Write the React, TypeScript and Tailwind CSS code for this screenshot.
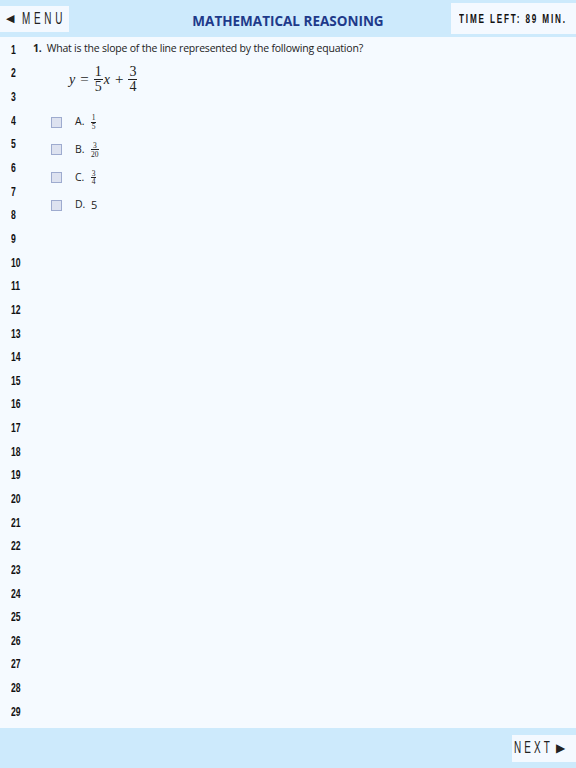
export default function App() {
  const rows = Array.from({ length: 29 }, (_, i) => i + 1);
  const options = [
    { label: "A.", value: <Frac n="1" d="5" /> },
    { label: "B.", value: <Frac n="3" d="20" /> },
    { label: "C.", value: <Frac n="3" d="4" /> },
    { label: "D.", value: <span className="text-[11px]">5</span> },
  ];

  return (
    <div className="flex h-[768px] w-[576px] flex-col bg-[#cdeafc] font-['Open_Sans',sans-serif] text-[#222]">
      {/* Header */}
      <header className="relative flex h-[37px] shrink-0 items-center justify-between">
        <div className="flex h-[26px] w-[69px] items-center bg-[#f4f9ff] pl-[6px] font-['Liberation_Sans',sans-serif] text-[#222]">
          <span className="text-[11px]">◀</span>
          <span className="ml-[8px] inline-block origin-left scale-x-[0.62] whitespace-nowrap text-[16px] font-light tracking-[6px]">
            MENU
          </span>
        </div>
        <h1 className="pointer-events-none absolute left-0 right-0 top-[11px] text-center text-[13.5px] font-bold text-[#1e3a8a]">
          MATHEMATICAL REASONING
        </h1>
        <div className="flex h-[31px] w-[125px] items-center bg-[#f4f9ff] pl-[8px] font-['Liberation_Sans',sans-serif] text-[#111]">
          <span className="inline-block origin-left scale-x-[0.68] whitespace-nowrap text-[12px] font-bold tracking-[2.7px]">
            TIME LEFT: 89 MIN.
          </span>
        </div>
      </header>

      {/* Content */}
      <main className="relative flex h-[691px] shrink-0 bg-[#f5faff]">
        <ol className="flex w-[33px] flex-col pt-[1px] font-['Liberation_Sans',sans-serif] text-[12px] font-bold text-[#111]">
          {rows.map((r) => (
            <li key={r} className="flex h-[23.65px] items-center pl-[11px]">
              <span className="inline-block origin-left scale-x-[0.72]">{r}</span>
            </li>
          ))}
        </ol>

        <div className="flex flex-col pt-[2px]">
          <p className="text-[10.5px] leading-[19px] tracking-[-0.2px]">
            <span className="font-bold">1.</span>&nbsp; What is the slope of the line represented by the following equation?
          </p>

          {/* equation */}
          <div className="mt-[8px] flex items-center pl-[36px] font-['Liberation_Serif',serif] text-[14px]">
            <span className="italic">y</span>
            <span className="mx-[5px] text-[15px]">=</span>
            <span className="inline-flex flex-col items-center leading-[12px]">
              <span>1</span>
              <span className="my-[1px] h-px w-[9px] bg-[#222]" />
              <span>5</span>
            </span>
            <span className="ml-[1px] italic">x</span>
            <span className="mx-[5px] text-[15px]">+</span>
            <span className="inline-flex flex-col items-center leading-[12px]">
              <span>3</span>
              <span className="my-[1px] h-px w-[9px] bg-[#222]" />
              <span>4</span>
            </span>
          </div>

          <div className="mt-[22px] flex flex-col gap-[13.7px] pl-[18px]">
            {options.map((o) => (
              <div key={o.label} className="flex h-[14px] items-center">
                <span className="h-[11px] w-[11px] border border-[#9eabcf] bg-[#dde2f0]" />
                <span className="ml-[13px] w-[15px] text-[10.5px]">{o.label}</span>
                <span className="ml-[1px] text-[10.5px]">{o.value}</span>
              </div>
            ))}
          </div>
        </div>
      </main>

      {/* Footer */}
      <footer className="flex flex-1 items-center justify-end">
        <div className="flex h-[27px] w-[64px] items-center bg-[#f4f9ff] pl-[2px] font-['Liberation_Sans',sans-serif] text-[#222]">
          <span className="inline-block w-[42px] origin-left scale-x-[0.62] whitespace-nowrap text-[16px] font-light tracking-[5px]">
            NEXT
          </span>
          <span className="text-[12px]">▶</span>
        </div>
      </footer>
    </div>
  );
}

function Frac({ n, d }: { n: string; d: string }) {
  return (
    <span className="inline-flex flex-col items-center align-middle font-['Liberation_Serif',serif] text-[7.5px] leading-[7px]">
      <span>{n}</span>
      <span className="my-[0.5px] h-[0.75px] w-full min-w-[5px] bg-[#222]" />
      <span>{d}</span>
    </span>
  );
}
